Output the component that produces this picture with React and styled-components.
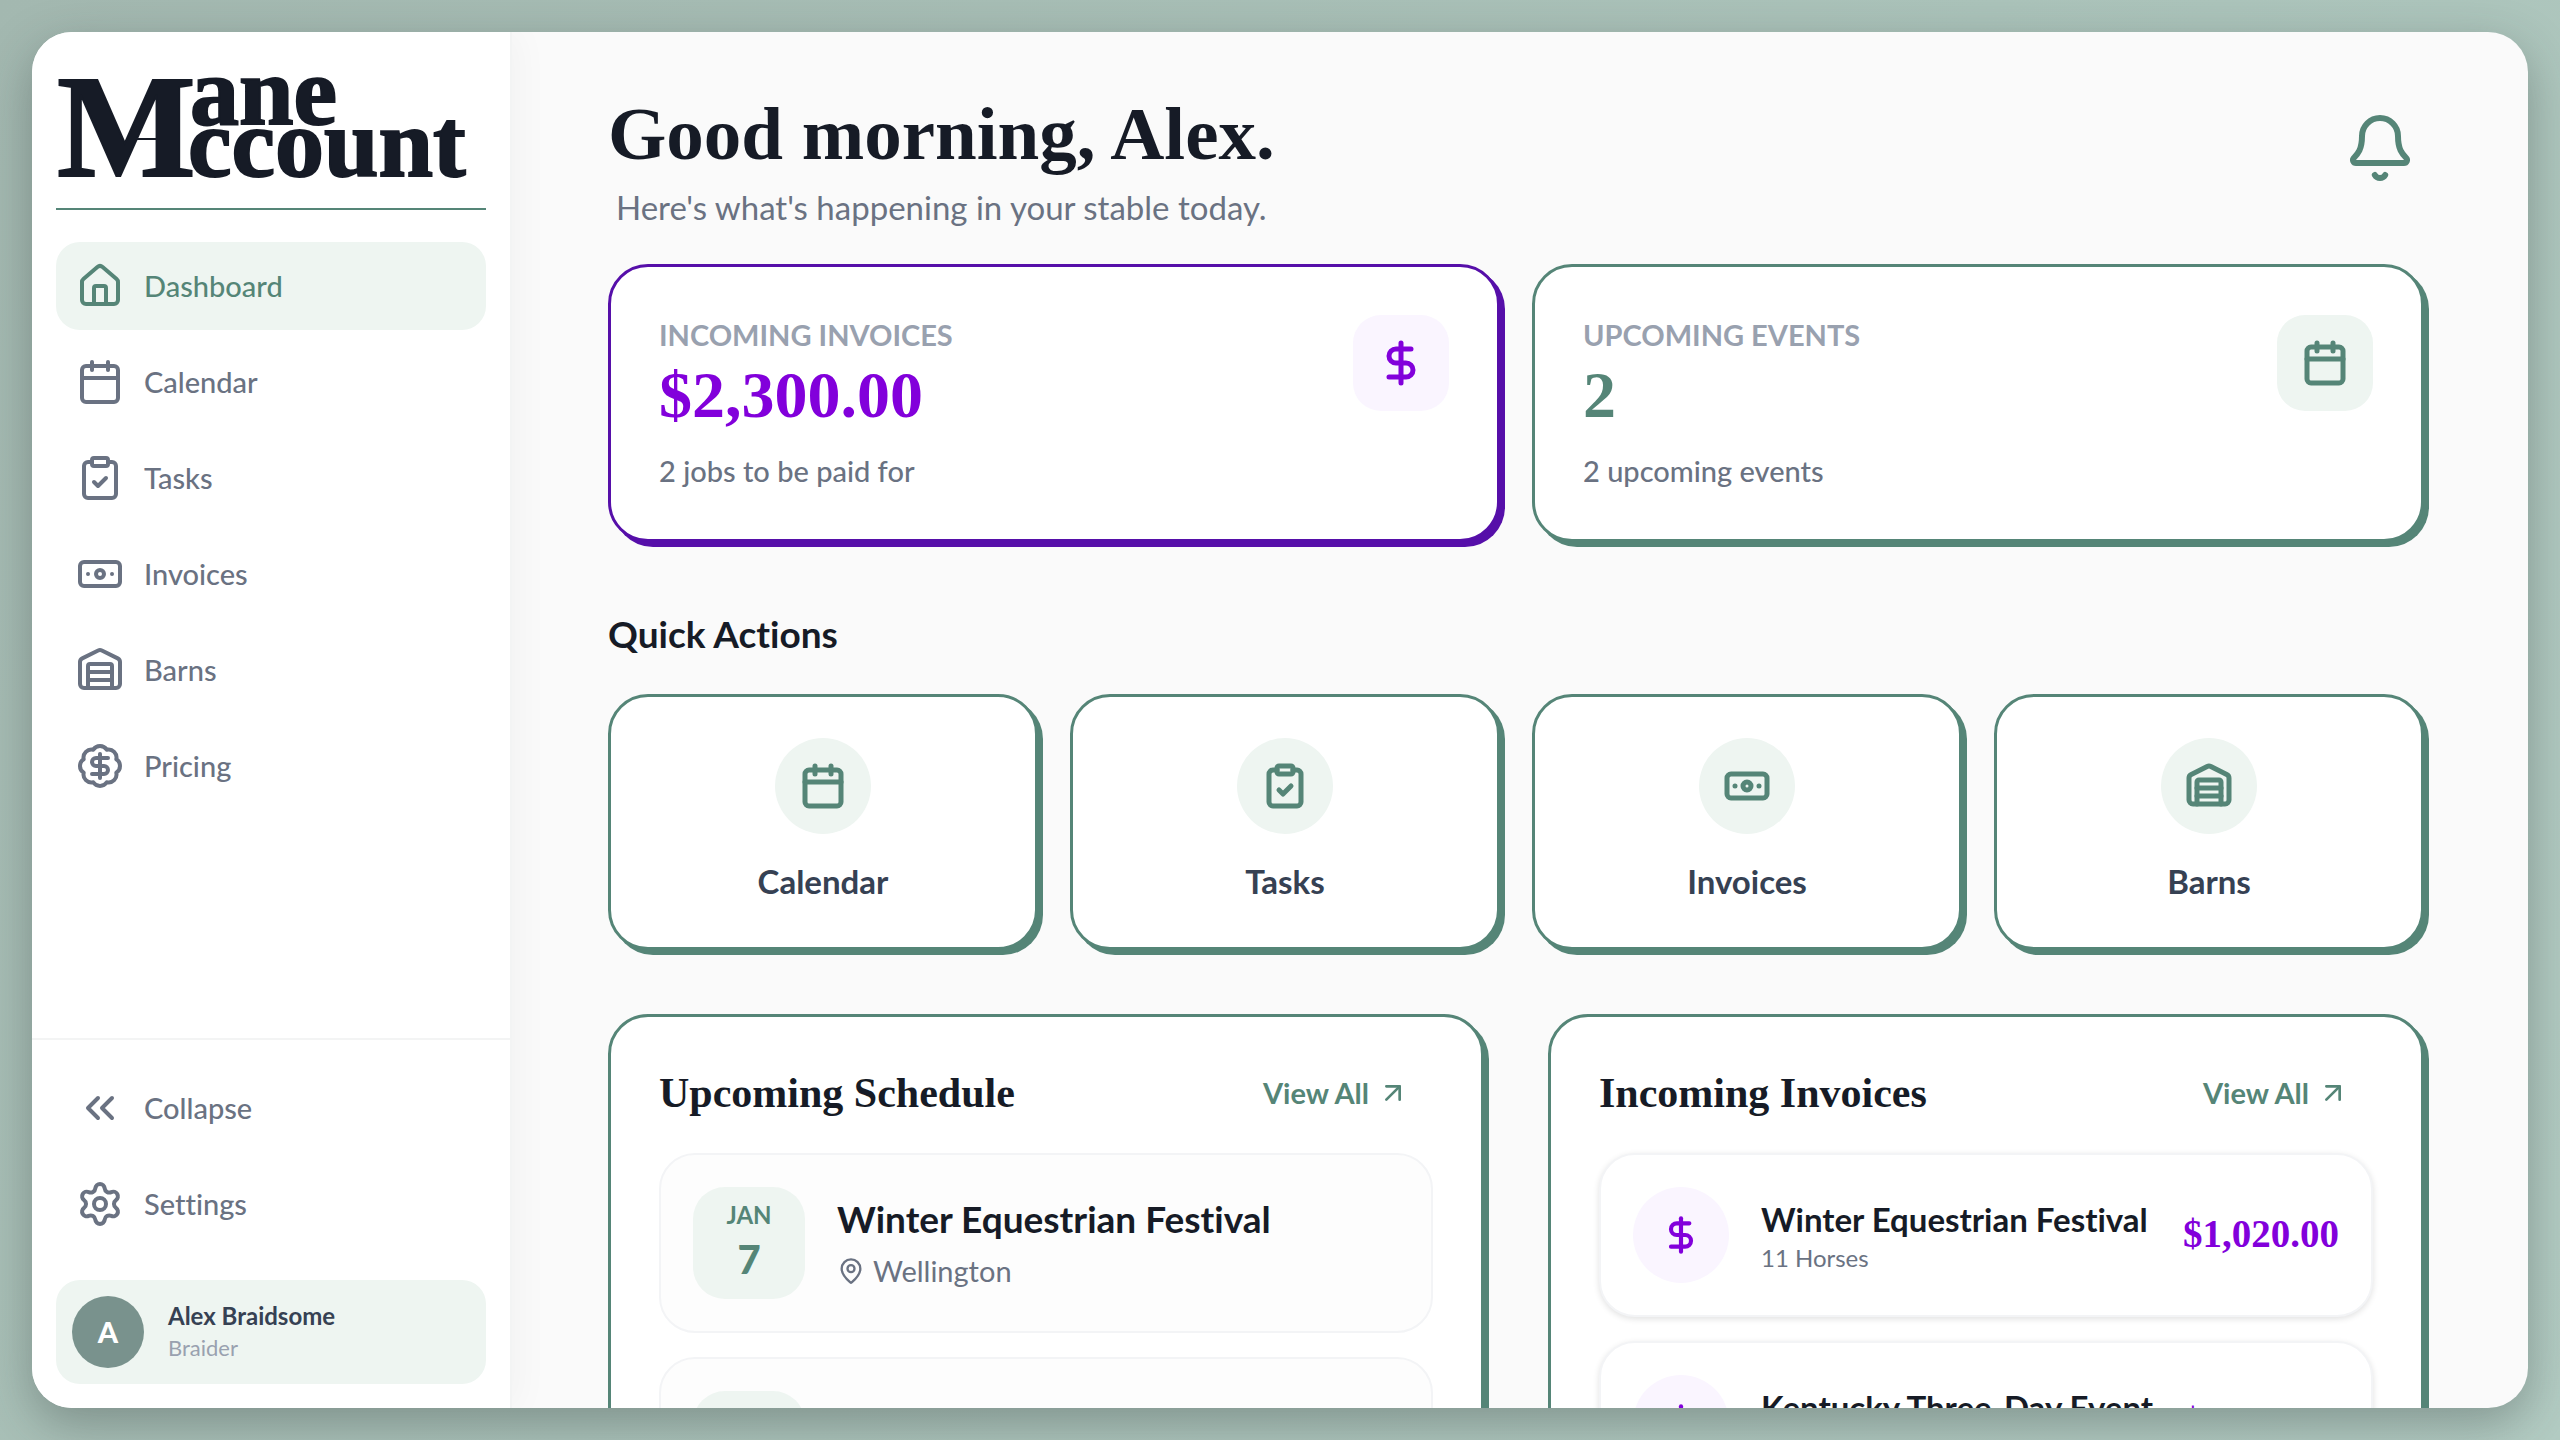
import React from "react";
import styled, { createGlobalStyle } from "styled-components";
import {
  ArrowUpRight,
  BadgeDollarSign,
  Banknote,
  Bell,
  Calendar,
  ChevronsLeft,
  ClipboardCheck,
  DollarSign,
  House,
  MapPin,
  Settings,
  Warehouse,
} from "lucide-react";

const navItems = [
  { label: "Dashboard", icon: House, active: true },
  { label: "Calendar", icon: Calendar },
  { label: "Tasks", icon: ClipboardCheck },
  { label: "Invoices", icon: Banknote },
  { label: "Barns", icon: Warehouse },
  { label: "Pricing", icon: BadgeDollarSign },
];

const quickActions = [
  { label: "Calendar", icon: Calendar },
  { label: "Tasks", icon: ClipboardCheck },
  { label: "Invoices", icon: Banknote },
  { label: "Barns", icon: Warehouse },
];

const events = [
  { id: 1, month: "JAN", day: 7, title: "Winter Equestrian Festival", place: "Wellington" },
  { id: 2, month: "APR", day: 23, title: "Kentucky Three-Day Event", place: "Lexington" },
];

const invoices = [
  { id: 1, title: "Winter Equestrian Festival", horses: 11, amount: "$1,020.00" },
  { id: 2, title: "Kentucky Three-Day Event", horses: 14, amount: "$1,280.00" },
];

function Logo() {
  return (
    <LogoSvg width="424" height="120" viewBox="0 0 424 120" role="img" aria-label="Mane Account">
      <text x="1" y="112" fontSize="147">M</text>
      <text x="134" y="60" fontSize="98">ane</text>
      <text x="132" y="112" fontSize="98">ccount</text>
      <path d="M74 75H122" />
    </LogoSvg>
  );
}

function Sidebar() {
  return (
    <Aside>
      <Brand href="#">
        <Logo />
      </Brand>
      <Nav>
        {navItems.map(({ label, icon: Icon, active }) => (
          <NavLink key={label} href="#" $active={active}>
            <Icon size={48} />
            {label}
          </NavLink>
        ))}
      </Nav>
      <AsideFooter>
        <NavButton type="button">
          <ChevronsLeft size={48} />
          Collapse
        </NavButton>
        <NavLink href="#">
          <Settings size={48} />
          Settings
        </NavLink>
        <User>
          <Avatar>A</Avatar>
          <div>
            <UserName>Alex Braidsome</UserName>
            <UserRole>Braider</UserRole>
          </div>
        </User>
      </AsideFooter>
    </Aside>
  );
}

function StatCard({ title, value, note, icon: Icon, tone }) {
  return (
    <Stat $tone={tone}>
      <div>
        <StatTitle>{title}</StatTitle>
        <StatValue $tone={tone}>{value}</StatValue>
        <StatNote>{note}</StatNote>
      </div>
      <IconTile $tone={tone}>
        <Icon size={48} strokeWidth={2.5} />
      </IconTile>
    </Stat>
  );
}

function ViewAll() {
  return (
    <ViewAllButton type="button">
      View All
      <ArrowUpRight size={32} />
    </ViewAllButton>
  );
}

function App() {
  return (
    <>
      <GlobalStyle />
      <Page>
        <Shell>
          <Sidebar />
          <Main>
            <Header>
              <div>
                <Greeting>Good morning, Alex.</Greeting>
                <SubGreeting>Here's what's happening in your stable today.</SubGreeting>
              </div>
              <BellButton type="button" aria-label="Notifications">
                <Bell size={72} />
              </BellButton>
            </Header>
            <Stats>
              <StatCard
                title="INCOMING INVOICES"
                value="$2,300.00"
                note="2 jobs to be paid for"
                icon={DollarSign}
                tone="purple"
              />
              <StatCard title="UPCOMING EVENTS" value="2" note="2 upcoming events" icon={Calendar} tone="green" />
            </Stats>
            <SectionTitle>Quick Actions</SectionTitle>
            <Actions>
              {quickActions.map(({ label, icon: Icon }) => (
                <Action key={label} type="button">
                  <ActionIcon>
                    <Icon size={48} strokeWidth={2.5} />
                  </ActionIcon>
                  {label}
                </Action>
              ))}
            </Actions>
            <Panels>
              <Panel>
                <PanelHeader>
                  <PanelTitle>Upcoming Schedule</PanelTitle>
                  <ViewAll />
                </PanelHeader>
                <List>
                  {events.map((event) => (
                    <EventRow key={event.id}>
                      <DateBadge>
                        <Month>{event.month}</Month>
                        <Day>{event.day}</Day>
                      </DateBadge>
                      <div>
                        <EventTitle>{event.title}</EventTitle>
                        <Place>
                          <MapPin size={28} />
                          {event.place}
                        </Place>
                      </div>
                    </EventRow>
                  ))}
                </List>
              </Panel>
              <Panel>
                <PanelHeader>
                  <PanelTitle>Incoming Invoices</PanelTitle>
                  <ViewAll />
                </PanelHeader>
                <List>
                  {invoices.map((invoice) => (
                    <InvoiceRow key={invoice.id}>
                      <InvoiceIcon>
                        <DollarSign size={40} strokeWidth={2.5} />
                      </InvoiceIcon>
                      <InvoiceText>
                        <InvoiceTitle>{invoice.title}</InvoiceTitle>
                        <Horses>{invoice.horses} Horses</Horses>
                      </InvoiceText>
                      <Amount>{invoice.amount}</Amount>
                    </InvoiceRow>
                  ))}
                </List>
              </Panel>
            </Panels>
          </Main>
        </Shell>
      </Page>
    </>
  );
}

export default App;

const sans = `Lato, "Open Sans", sans-serif`;
const serif = `"Liberation Serif", "Times New Roman", serif`;

const tones = {
  purple: { line: "#560fa9", text: "#8200db", tint: "#faf5ff" },
  green: { line: "#558577", text: "#558577", tint: "#eef5f1" },
};

const GlobalStyle = createGlobalStyle`
  * {
    box-sizing: border-box;
  }
  body {
    margin: 0;
    font-family: ${sans};
    font-variant-ligatures: none;
    color: #161b26;
  }
  h1, h2, h3, p, ul {
    margin: 0;
    padding: 0;
  }
  button {
    font-family: inherit;
    border: none;
    background: none;
    cursor: pointer;
  }
  a {
    color: inherit;
    text-decoration: none;
  }
  svg {
    flex-shrink: 0;
  }
`;

const Page = styled.div`
  height: 100vh;
  padding: 32px;
  background: linear-gradient(135deg, #a3b8b0 0%, #abc3ba 50%, #b3ccc3 100%);
`;

const Shell = styled.div`
  display: flex;
  height: 100%;
  border-radius: 40px;
  background: #fafafa;
  box-shadow: 0 16px 48px rgba(40, 50, 50, 0.34);
  overflow: hidden;
`;

const Aside = styled.aside`
  display: flex;
  flex-direction: column;
  width: 480px;
  flex-shrink: 0;
  border-right: 2px solid #f3f4f4;
  background: #fff;
  box-shadow: 8px 0 32px rgba(0, 0, 0, 0.03);
`;

const Brand = styled.a`
  height: 178px;
  margin: 0 24px;
  padding: 32px 0 0;
  border-bottom: 2px solid #558577;
`;

const LogoSvg = styled.svg`
  display: block;
  overflow: visible;
  font-family: ${serif};
  font-weight: 700;
  fill: #161b26;
  stroke: #161b26;
  stroke-width: 2;
`;

const Nav = styled.nav`
  display: flex;
  flex: 1;
  flex-direction: column;
  gap: 8px;
  padding: 32px 24px;
`;

const NavLink = styled.a`
  display: flex;
  align-items: center;
  gap: 20px;
  height: 88px;
  padding: 0 20px;
  border-radius: 24px;
  font-size: 29px;
  line-height: 40px;
  font-weight: 500;
  color: ${({ $active }) => ($active ? "#558577" : "#6a7282")};
  background: ${({ $active }) => ($active ? "#eef5f1" : "transparent")};
`;

const NavButton = styled(NavLink).attrs({ as: "button" })``;

const AsideFooter = styled.div`
  display: flex;
  flex-direction: column;
  gap: 8px;
  padding: 24px;
  border-top: 2px solid #f3f4f4;
`;

const User = styled.div`
  display: flex;
  align-items: center;
  gap: 24px;
  height: 104px;
  margin-top: 24px;
  padding: 0 16px;
  border-radius: 24px;
  background: #eef5f1;
`;

const Avatar = styled.div`
  display: grid;
  place-items: center;
  width: 72px;
  height: 72px;
  border-radius: 50%;
  font-size: 29px;
  line-height: 40px;
  font-weight: 900;
  color: #fff;
  background: #79928d;
`;

const UserName = styled.div`
  font-size: 24px;
  line-height: 32px;
  font-weight: 700;
  color: #364153;
`;

const UserRole = styled.div`
  font-size: 22px;
  line-height: 32px;
  color: #99a1af;
`;

const Main = styled.main`
  flex: 1;
  min-width: 0;
  padding: 56px 104px 0 96px;
  overflow: hidden;
`;

const Header = styled.header`
  display: flex;
  justify-content: space-between;
  align-items: flex-start;
  height: 176px;
`;

const Greeting = styled.h1`
  font-family: ${serif};
  font-size: 75px;
  line-height: 92px;
  font-weight: 700;
`;

const SubGreeting = styled.p`
  padding-left: 8px;
  font-size: 33px;
  line-height: 54px;
  color: #6a7282;
`;

const BellButton = styled.button`
  display: grid;
  place-items: center;
  width: 88px;
  height: 120px;
  padding: 0;
  color: #558577;
`;

const Stats = styled.div`
  display: grid;
  grid-template-columns: 1fr 1fr;
  gap: 32px;
`;

const Stat = styled.section`
  display: flex;
  justify-content: space-between;
  height: 278px;
  padding: 48px;
  border: 3px solid ${({ $tone }) => tones[$tone].line};
  border-radius: 40px;
  background: #fff;
  box-shadow: 5px 5px 0 ${({ $tone }) => tones[$tone].line};
`;

const StatTitle = styled.h2`
  font-size: 29px;
  line-height: 40px;
  font-weight: 700;
  color: #99a1af;
`;

const StatValue = styled.div`
  font-family: ${serif};
  font-size: 66px;
  line-height: 80px;
  font-weight: 700;
  color: ${({ $tone }) => tones[$tone].text};
`;

const StatNote = styled.p`
  margin-top: 16px;
  font-size: 29px;
  line-height: 40px;
  font-weight: 500;
  color: #6a7282;
`;

const IconTile = styled.div`
  display: grid;
  place-items: center;
  width: 96px;
  height: 96px;
  border-radius: 28px;
  color: ${({ $tone }) => tones[$tone].text};
  background: ${({ $tone }) => tones[$tone].tint};
`;

const SectionTitle = styled.h2`
  margin: 64px 0 32px;
  font-size: 37px;
  line-height: 56px;
  font-weight: 700;
`;

const Actions = styled.div`
  display: grid;
  grid-template-columns: repeat(4, 1fr);
  gap: 32px;
`;

const Action = styled.button`
  display: flex;
  flex-direction: column;
  align-items: center;
  gap: 24px;
  height: 256px;
  padding: 41px 24px 0;
  border: 3px solid #558577;
  border-radius: 40px;
  font-size: 33px;
  line-height: 46px;
  font-weight: 700;
  color: #364153;
  background: #fff;
  box-shadow: 5px 5px 0 #558577;
`;

const ActionIcon = styled.span`
  display: grid;
  place-items: center;
  width: 96px;
  height: 96px;
  border-radius: 50%;
  color: #558577;
  background: #eef5f1;
`;

const Panels = styled.div`
  display: grid;
  grid-template-columns: 1fr 1fr;
  gap: 64px;
  margin-top: 64px;
`;

const Panel = styled.section`
  min-width: 0;
  padding: 48px;
  border: 3px solid #558577;
  border-radius: 40px;
  background: #fff;
  box-shadow: 5px 5px 0 #558577;
`;

const PanelHeader = styled.div`
  display: flex;
  justify-content: space-between;
  align-items: center;
  height: 56px;
  margin-bottom: 32px;
`;

const PanelTitle = styled.h2`
  font-family: ${serif};
  font-size: 42px;
  line-height: 56px;
  font-weight: 700;
`;

const ViewAllButton = styled.button`
  display: flex;
  align-items: center;
  gap: 8px;
  padding: 8px 24px;
  font-size: 29px;
  line-height: 40px;
  font-weight: 700;
  color: #558577;
`;

const List = styled.ul`
  display: flex;
  flex-direction: column;
  gap: 24px;
  list-style: none;
`;

const EventRow = styled.li`
  display: flex;
  align-items: center;
  gap: 32px;
  padding: 32px;
  border: 2px solid #f3f4f6;
  border-radius: 36px;
  background: #fdfdfd;
`;

const DateBadge = styled.div`
  display: flex;
  flex-direction: column;
  align-items: center;
  justify-content: center;
  width: 112px;
  height: 112px;
  padding-bottom: 8px;
  border-radius: 32px;
  color: #558577;
  background: #eef5f1;
`;

const Month = styled.span`
  font-size: 24px;
  line-height: 40px;
  font-weight: 700;
`;

const Day = styled.span`
  font-size: 40px;
  line-height: 48px;
  font-weight: 900;
`;

const EventTitle = styled.h3`
  font-size: 37px;
  line-height: 56px;
  font-weight: 700;
`;

const Place = styled.p`
  display: flex;
  align-items: center;
  gap: 8px;
  font-size: 29px;
  line-height: 48px;
  color: #6a7282;
`;

const InvoiceRow = styled.li`
  display: flex;
  align-items: center;
  gap: 32px;
  padding: 32px;
  border: 2px solid #f3f4f6;
  border-radius: 36px;
  background: #fff;
  box-shadow: 0 2px 6px rgba(0, 0, 0, 0.12);
`;

const InvoiceIcon = styled.span`
  display: grid;
  place-items: center;
  width: 96px;
  height: 96px;
  border-radius: 50%;
  color: #8200db;
  background: #faf5ff;
`;

const InvoiceText = styled.div`
  flex: 1;
  min-width: 0;
`;

const InvoiceTitle = styled.h3`
  font-size: 33px;
  line-height: 46px;
  font-weight: 700;
  white-space: nowrap;
`;

const Horses = styled.p`
  font-size: 24px;
  line-height: 32px;
  color: #6a7282;
`;

const Amount = styled.span`
  padding-bottom: 4px;
  font-family: ${serif};
  font-size: 39px;
  font-weight: 700;
  color: #8200db;
`;
